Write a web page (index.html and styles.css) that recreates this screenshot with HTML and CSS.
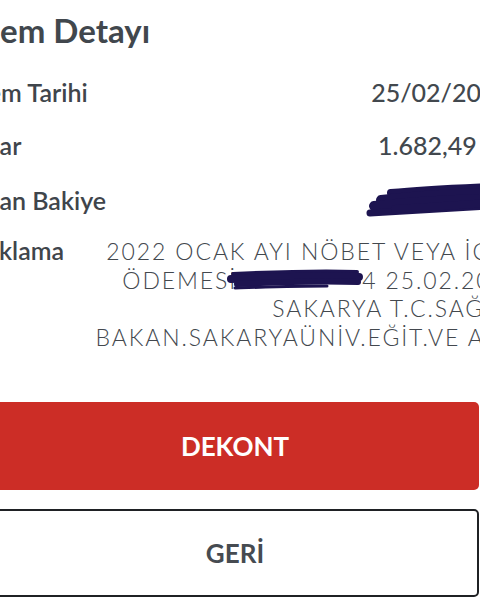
FILE: index.html
```html
<!DOCTYPE html>
<html lang="tr">
<head>
<meta charset="utf-8">
<link rel="stylesheet" href="styles.css">
</head>
<body>
<div class="page">
  <h1 class="title">İşlem Detayı</h1>
  <div class="rows">
    <div class="row">
      <span class="label">İşlem Tarihi</span>
      <span class="value">25/02/2022</span>
    </div>
    <div class="row">
      <span class="label">Tutar</span>
      <span class="value">1.682,49 TL</span>
    </div>
    <div class="row row-balance">
      <span class="label">Kalan Bakiye</span>
      <span class="value"><svg class="scribble-balance" width="145" height="36" viewBox="0 0 145 36"><g fill="none" stroke="#1d1450" stroke-linecap="round" stroke-linejoin="round"><path d="M26 10 C55 7 95 5 150 3" stroke-width="8"/><path d="M16 17 C50 13 95 10 150 9" stroke-width="10"/><path d="M9 23 C45 19 95 16 150 15" stroke-width="10"/><path d="M5 30 C50 27 95 25 142 22" stroke-width="7"/><path d="M30 26 C70 24 110 21 150 18" stroke-width="8"/></g></svg></span>
    </div>
    <div class="row row-desc">
      <span class="label">Açıklama</span>
      <p class="desc">2022 OCAK AYI NÖBET VEYA İCAP<br>ÖDEMESİ<span class="redact"><svg width="125" height="23" viewBox="0 0 125 23"><g fill="none" stroke="#1d1450" stroke-linecap="round"><path d="M-4 6 C40 4 90 3 120 4" stroke-width="4"/><path d="M-6 11 C40 9 90 8 122 9" stroke-width="8"/><path d="M0 16 C40 14 90 13 121 14" stroke-width="6"/><path d="M-2 20 C30 19 60 18 90 18" stroke-width="3"/></g></svg></span>4 25.02.2022<br>SAKARYA T.C.SAĞLIK<br>BAKAN.SAKARYAÜNİV.EĞİT.VE ARŞ.</p>
    </div>
  </div>
  <div class="actions">
    <button class="btn btn-primary">DEKONT</button>
    <button class="btn btn-outline">GERİ</button>
  </div>
</div>
</body>
</html>
```

FILE: styles.css
```css
html, body {
  margin: 0;
  padding: 0;
  background: #ffffff;
  overflow: hidden;
  width: 480px;
  height: 600px;
}

.page {
  width: 546px;
  margin-left: -36px;
  padding-top: 10px;
  font-family: Lato, "Open Sans", sans-serif;
  color: #3e444a;
}

.title {
  margin: 0 0 0 4px;
  font-size: 33px;
  line-height: 40px;
  font-weight: 700;
  color: #41474d;
}

.rows {
  margin-top: 27px;
  display: flex;
  flex-direction: column;
  gap: 23px;
}

.row {
  display: flex;
  justify-content: space-between;
  align-items: baseline;
}

.row-desc {
  margin-top: -7px;
}

.label {
  font-size: 25px;
  line-height: 30px;
  font-weight: 600;
  color: #3f454b;
  white-space: nowrap;
}

.value {
  font-size: 25px;
  line-height: 30px;
  font-weight: 500;
  color: #42484e;
  white-space: nowrap;
}

.scribble-balance {
  display: inline-block;
  vertical-align: -9px;
}

.desc {
  margin: 0 -12px 0 0;
  font-size: 23px;
  line-height: 28.5px;
  font-weight: 300;
  letter-spacing: 1.9px;
  color: #43484e;
  text-align: right;
  white-space: nowrap;
}

.redact {
  display: inline-block;
  width: 125px;
  height: 23px;
  vertical-align: -2px;
  overflow: visible;
}

.redact svg {
  display: block;
  overflow: visible;
}

.actions {
  margin: 51px 31px 0 27px;
  display: flex;
  flex-direction: column;
  gap: 19px;
}

.btn {
  display: block;
  width: 100%;
  height: 88px;
  border-radius: 5px;
  font-family: Lato, "Open Sans", sans-serif;
  font-size: 26px;
  font-weight: 700;
  cursor: pointer;
}

.btn-primary {
  background: #cc2d26;
  color: #ffffff;
  border: none;
}

.btn-outline {
  background: #ffffff;
  color: #464b51;
  border: 2px solid #1f2124;
}
```
